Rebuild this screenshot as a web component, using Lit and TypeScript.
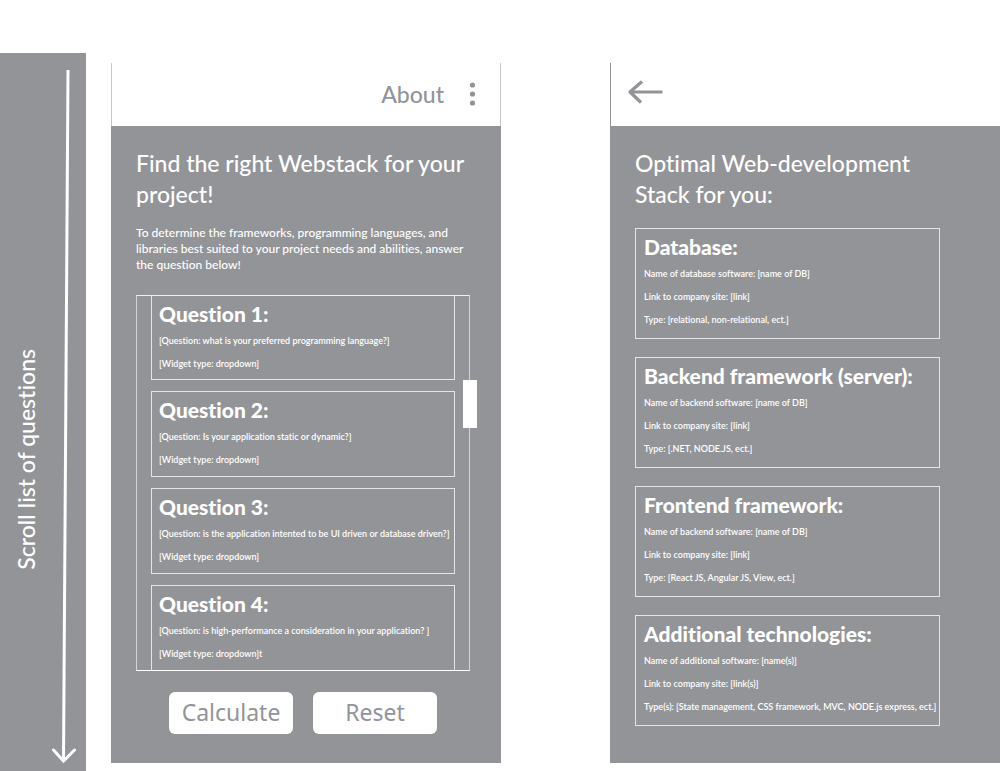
import { LitElement, html, css } from "lit";
import { customElement, property } from "lit/decorators.js";

interface Entry {
  title: string;
  lines: string[];
}

const questions: Entry[] = [
  { title: "Question 1:", lines: ["[Question: what is your preferred programming language?]", "[Widget type: dropdown]"] },
  { title: "Question 2:", lines: ["[Question: Is your application static or dynamic?]", "[Widget type: dropdown]"] },
  { title: "Question 3:", lines: ["[Question: is the application intented to be UI driven or database driven?]", "[Widget type: dropdown]"] },
  { title: "Question 4:", lines: ["[Question: is high-performance a consideration in your application? ]", "[Widget type: dropdown]t"] },
];

const results: Entry[] = [
  { title: "Database:", lines: ["Name of database software: [name of DB]", "Link to company site: [link]", "Type: [relational, non-relational, ect.]"] },
  { title: "Backend framework (server):", lines: ["Name of backend software: [name of DB]", "Link to company site: [link]", "Type: [.NET, NODE.JS, ect.]"] },
  { title: "Frontend framework:", lines: ["Name of backend software: [name of DB]", "Link to company site: [link]", "Type: [React JS, Angular JS, View, ect.]"] },
  { title: "Additional technologies:", lines: ["Name of additional software: [name(s)]", "Link to company site: [link(s)]", "Type(s): [State management, CSS framework, MVC, NODE.js express, ect.]"] },
];

@customElement("info-card")
class InfoCard extends LitElement {
  @property({ attribute: false }) entry!: Entry;

  static styles = css`
    :host {
      display: block;
      flex: none;
      box-sizing: border-box;
      border: 1px solid #e6e6e8;
      padding: 4px 7px 5px;
      color: #fff;
    }
    .title {
      margin: 0 0 2px;
      font-size: 21px;
      line-height: 27px;
      font-weight: 900;
      white-space: nowrap;
    }
    .line {
      margin: 0;
      font-size: 9px;
      line-height: 23px;
      font-weight: 600;
      white-space: nowrap;
    }
  `;

  render() {
    return html`
      <h2 class="title">${this.entry.title}</h2>
      ${this.entry.lines.map((l) => html`<p class="line">${l}</p>`)}
    `;
  }
}

@customElement("app-root")
class AppRoot extends LitElement {
  static styles = css`
    :host {
      display: block;
      font-family: Lato, "Open Sans", sans-serif;
      font-variant-ligatures: none;
      color: #fff;
    }
    .page {
      display: flex;
      box-sizing: border-box;
      height: 100vh;
      min-height: 600px;
      background: #fff;
    }
    .rail {
      flex: none;
      box-sizing: border-box;
      width: 86px;
      margin: 53px 25px 0 0;
      padding: 16px 10px 6px 11px;
      display: flex;
      justify-content: space-between;
      background: #939498;
    }
    .rail-label {
      align-self: center;
      margin: 84px 0 0;
      writing-mode: vertical-rl;
      transform: rotate(180deg);
      font-size: 23px;
      line-height: 30px;
      font-weight: 500;
      white-space: nowrap;
    }
    .rail-arrow {
      width: 24px;
      height: 100%;
    }
    .screen {
      flex: 1;
      min-width: 0;
      margin: 63px 0 8px;
      display: flex;
      flex-direction: column;
      background: #939498;
    }
    .screen + .screen {
      margin-left: 109px;
    }
    .bar {
      flex: none;
      box-sizing: border-box;
      height: 63px;
      display: flex;
      align-items: center;
      justify-content: flex-end;
      gap: 21px;
      padding: 0 20px 1px 16px;
      border: solid #c9c9cb;
      border-width: 0 1px;
      background: #fff;
    }
    .bar.back {
      justify-content: flex-start;
      padding-bottom: 5px;
      border-color: #939498;
      border-right: 0;
    }
    .about {
      font-size: 23px;
      line-height: 30px;
      font-weight: 500;
      color: #939498;
      text-decoration: none;
    }
    .icon {
      display: block;
      padding: 0;
      border: 0;
      background: none;
      color: #939498;
      cursor: pointer;
    }
    .icon svg {
      display: block;
    }
    .body {
      flex: 1;
      min-height: 0;
      display: flex;
      flex-direction: column;
      padding: 22px 31px 29px 25px;
    }
    .heading {
      margin: 0;
      font-size: 23px;
      line-height: 31px;
      font-weight: 500;
    }
    .intro {
      margin: 15px 0 22px;
      font-size: 12px;
      line-height: 16px;
      font-weight: 500;
    }
    .frame {
      position: relative;
      flex: 1;
      min-height: 0;
      display: flex;
      border: 1px solid #d4d4d6;
      border-top-color: #f0f0f1;
      border-bottom-color: #fff;
    }
    .questions {
      flex: 1;
      display: flex;
      flex-direction: column;
      gap: 11px;
      padding: 0 14px;
      overflow-y: auto;
      scrollbar-width: none;
    }
    .questions info-card:first-child {
      border-top: 0;
      padding-bottom: 4px;
    }
    .thumb {
      position: absolute;
      top: 84px;
      right: -8px;
      width: 14px;
      height: 48px;
      background: #fff;
    }
    .actions {
      flex: none;
      display: flex;
      justify-content: center;
      gap: 20px;
      margin-top: 21px;
    }
    .action {
      width: 124px;
      height: 42px;
      padding: 0 0 2px;
      border: 0;
      border-radius: 6px;
      background: #fff;
      color: #939498;
      font-family: "Noto Sans", sans-serif;
      font-size: 23px;
      line-height: 30px;
      font-weight: 400;
      cursor: pointer;
    }
    .results {
      display: flex;
      flex-direction: column;
      gap: 18px;
      margin: 18px 29px 0 0;
    }
    .results info-card {
      padding-bottom: 7px;
      padding-left: 8px;
    }
  `;

  render() {
    return html`
      <div class="page">
        <aside class="rail">
          <p class="rail-label">Scroll list of questions</p>
          <svg class="rail-arrow" viewBox="0 0 24 696" fill="none" stroke="#fff" stroke-width="3" aria-hidden="true">
            <path d="M16 1 11.5 692" />
            <path d="M1.5 681 11.5 692 22.5 681" stroke-linecap="round" />
          </svg>
        </aside>

        <main class="screen">
          <header class="bar">
            <a class="about" href="#about">About</a>
            <button class="icon" aria-label="Menu">
              <svg width="15" height="24" viewBox="0 0 15 24" fill="currentColor">
                <circle cx="7.5" cy="3" r="2.6" />
                <circle cx="7.5" cy="12" r="2.6" />
                <circle cx="7.5" cy="21" r="2.6" />
              </svg>
            </button>
          </header>
          <div class="body">
            <h1 class="heading">Find the right Webstack for your project!</h1>
            <p class="intro">
              To determine the frameworks, programming languages, and libraries best suited to your
              project needs and abilities, answer the question below!
            </p>
            <div class="frame">
              <div class="questions">
                ${questions.map((q) => html`<info-card .entry=${q}></info-card>`)}
              </div>
              <div class="thumb"></div>
            </div>
            <div class="actions">
              <button class="action">Calculate</button>
              <button class="action">Reset</button>
            </div>
          </div>
        </main>

        <section class="screen">
          <header class="bar back">
            <button class="icon" aria-label="Back">
              <svg width="36" height="24" viewBox="0 0 36 24" fill="none" stroke="currentColor" stroke-width="3.2">
                <path d="M3 12H35.500M15 1.500 3 12 14 22.500" stroke-linejoin="round" />
              </svg>
            </button>
          </header>
          <div class="body">
            <h1 class="heading">Optimal Web-development<br />Stack for you:</h1>
            <div class="results">
              ${results.map((r) => html`<info-card .entry=${r}></info-card>`)}
            </div>
          </div>
        </section>
      </div>
    `;
  }
}
